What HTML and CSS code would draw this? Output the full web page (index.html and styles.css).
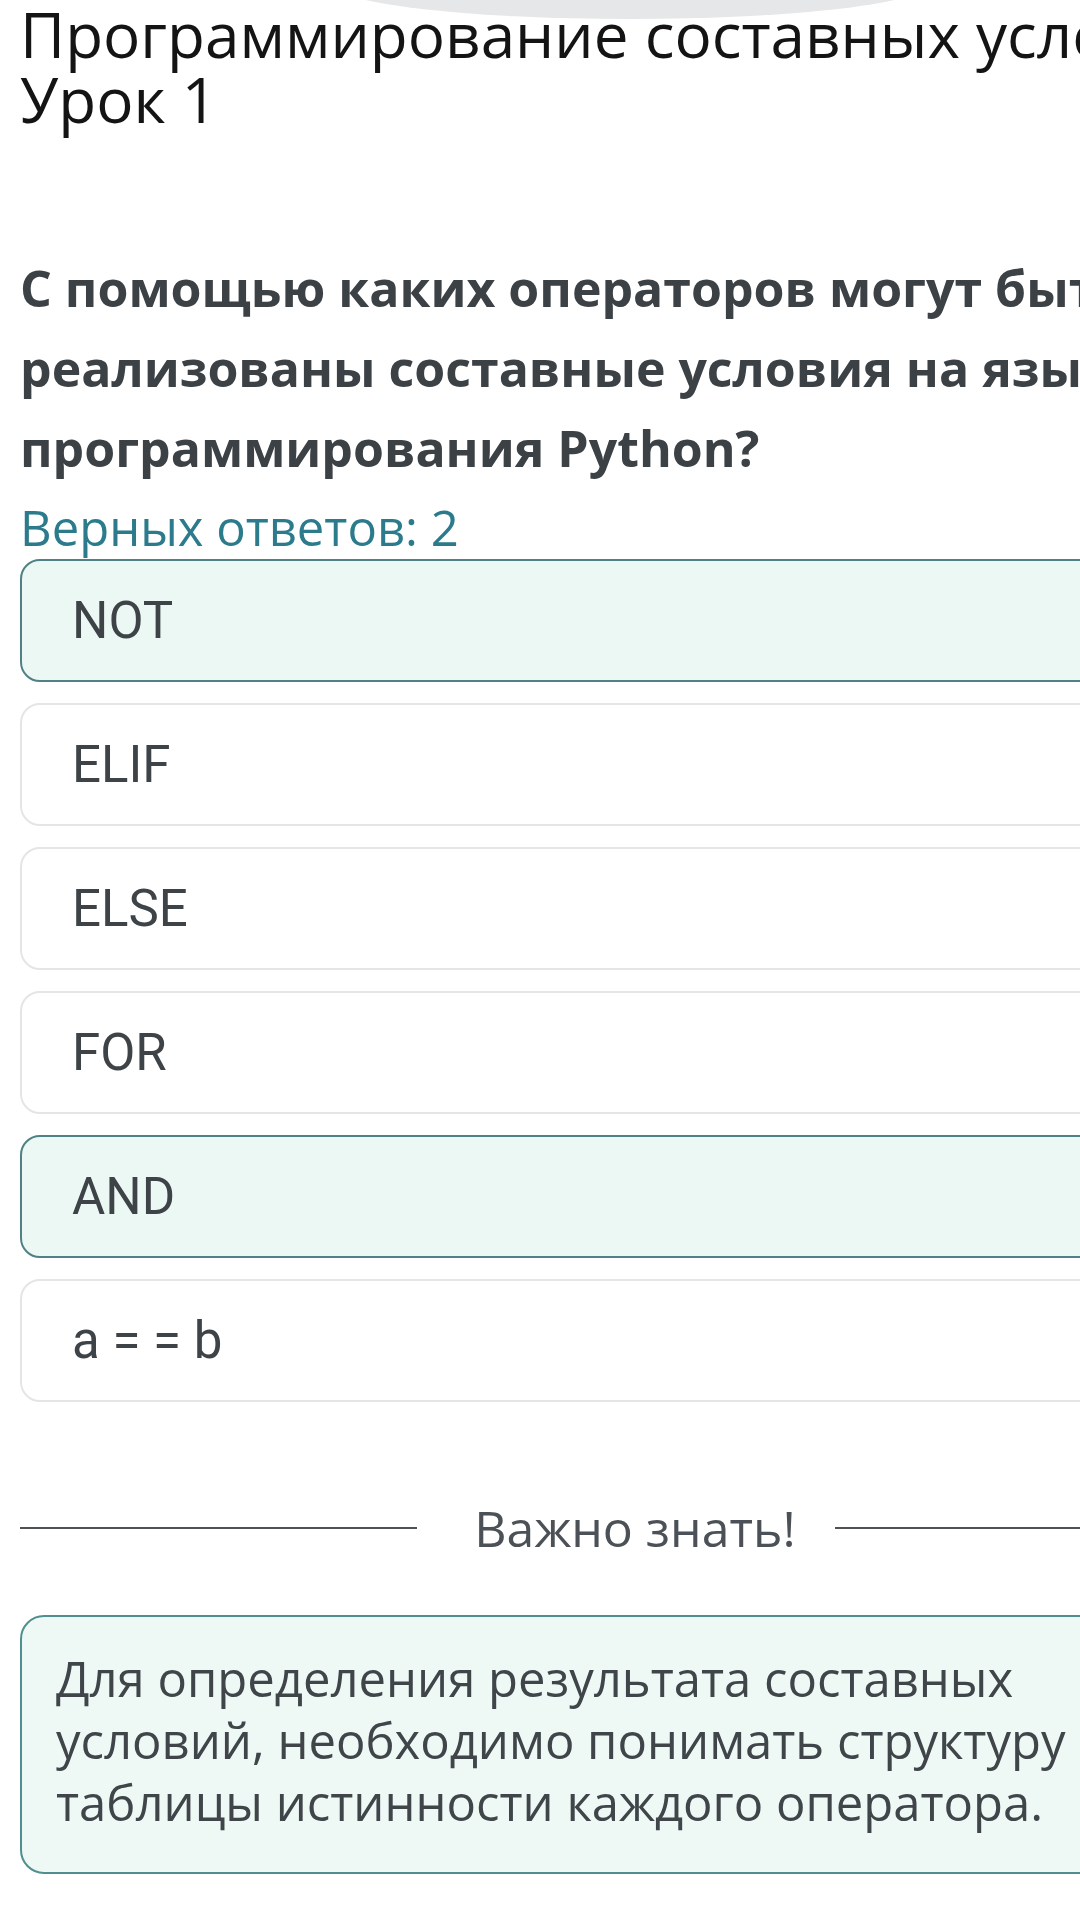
FILE: index.html
```html
<!doctype html>
<html lang="ru">
<head>
  <meta charset="utf-8">
  <title>Урок 1</title>
  <link rel="stylesheet" href="styles.css">
</head>
<body>
  <div class="top-arc"></div>
  <div class="page">
    <h1 class="lesson-title">Программирование составных условий. Урок 1</h1>

    <h2 class="question">С помощью каких операторов могут быть реализованы составные условия на языке программирования Python?</h2>
    <p class="answers-count">Верных ответов: 2</p>

    <ul class="options">
      <li class="option selected">NOT</li>
      <li class="option">ELIF</li>
      <li class="option">ELSE</li>
      <li class="option">FOR</li>
      <li class="option selected">AND</li>
      <li class="option">a = = b</li>
    </ul>

    <div class="divider">
      <span class="divider-line"></span>
      <span class="divider-text">Важно знать!</span>
      <span class="divider-line"></span>
    </div>

    <div class="note">
      Для определения результата составных условий, необходимо понимать структуру таблицы истинности каждого оператора.
    </div>
  </div>
</body>
</html>
```

FILE: styles.css
```css
body{
  margin: 0;
  background: #fff;
  overflow: hidden;
  font-family: "Open Sans", "Noto Sans", sans-serif;
}
.top-arc{
  position: absolute;
  top: -53px;
  left: 330px;
  width: 600px;
  height: 72px;
  border-radius: 50%;
  background: #e6e7e8;
}
.page{
  position: relative;
  width: 1228px;
  padding-left: 20px;
}
.lesson-title{
  margin: 0;
  padding-top: 2px;
  font-size: 62px;
  font-weight: 400;
  line-height: 65px;
  color: #141414;
}
.question{
  margin: 116px 0 0;
  font-size: 50px;
  font-weight: 700;
  line-height: 80px;
  color: #3c4146;
}
.answers-count{
  margin: 11px 0 0;
  font-size: 49px;
  line-height: 56px;
  color: #2b7b8d;
}
.options{
  list-style: none;
  margin: 4px 0 0;
  padding: 0;
}
.option{
  display: flex;
  align-items: center;
  box-sizing: border-box;
  height: 123px;
  margin-bottom: 21px;
  padding-left: 50px;
  border: 2px solid #e5e5e5;
  border-radius: 20px;
  background: #fff;
  font-family: Roboto, "Open Sans", sans-serif;
  font-size: 51px;
  color: #3d4347;
}
.option.selected{
  border-color: #4f8185;
  background: #ecf8f3;
}
.divider{
  display: flex;
  align-items: center;
  margin: 94px 16px 0 0;
  height: 64px;
}
.divider-line{
  flex: 1;
  height: 2px;
  background: #4f5254;
}
.divider-text{
  margin: 0 39px 0 57px;
  font-size: 50px;
  color: #4b5156;
}
.note{
  margin-top: 55px;
  padding: 30px 36px 39px 34px;
  border: 2px solid #4f8f8f;
  border-radius: 24px;
  background: #eef8f5;
  font-size: 49px;
  line-height: 62px;
  color: #3f4549;
}
```
